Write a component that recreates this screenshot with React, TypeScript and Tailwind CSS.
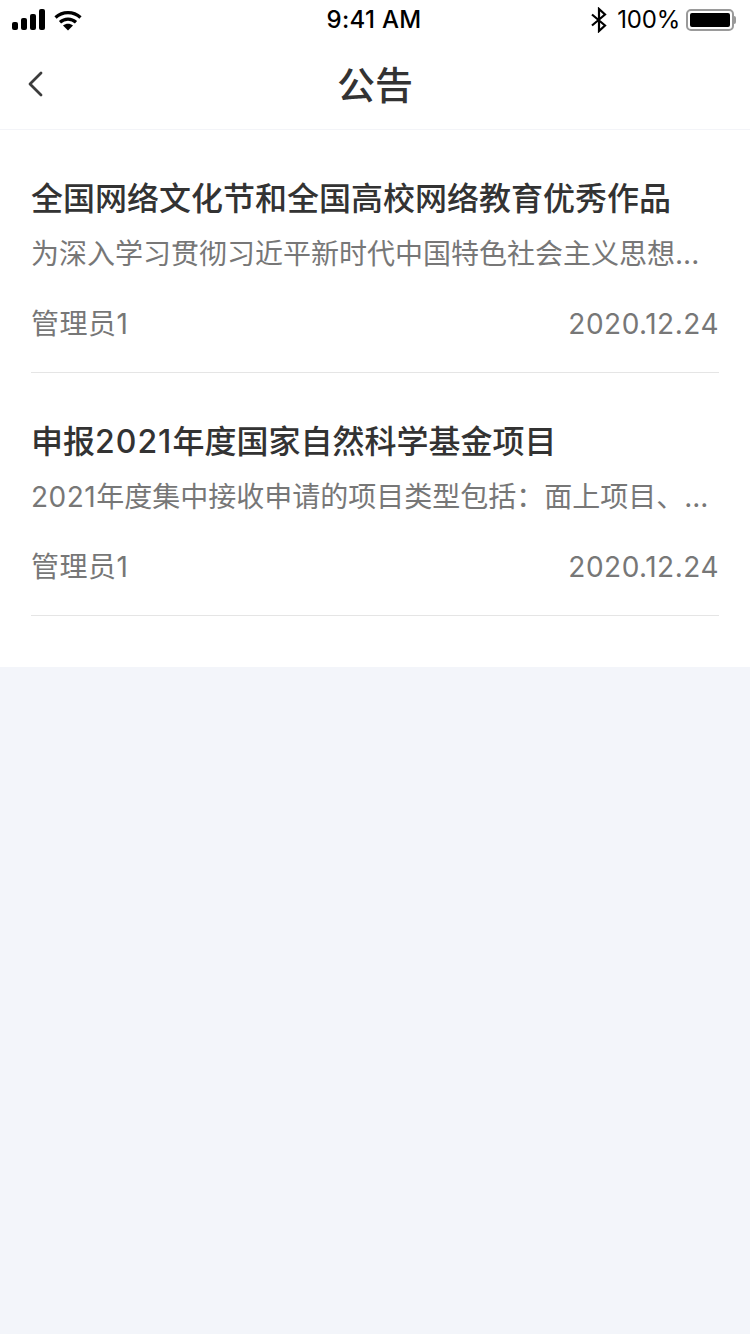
import React from 'react';

const notices = [
  {
    title: <>全国网络文化节和全国高校网络教育优秀作品</>,
    summary: <>为深入学习贯彻习近平新时代中国特色社会主义思想...</>,
    author: '管理员1',
    date: '2020.12.24',
  },
  {
    title: <>申报<span className="tracking-[1px]">2021</span>年度国家自然科学基金项目</>,
    summary: <><span className="tracking-[0.5px]">2021</span>年度集中接收申请的项目类型包括：面上项目、...</>,
    author: '管理员1',
    date: '2020.12.24',
  },
];

const StatusBar = () => (
  <div className="flex h-10 items-center justify-between pl-3 pr-[14px] text-black">
    <div className="flex w-[200px] items-center gap-[8px]">
      <svg width="34" height="22" viewBox="0 0 34 22" fill="currentColor">
        <rect x="0" y="13" width="6" height="8" rx="2" />
        <rect x="9" y="9" width="6" height="12" rx="2" />
        <rect x="18" y="5" width="6" height="16" rx="2" />
        <rect x="27" y="0" width="6" height="21" rx="2" />
      </svg>
      <svg width="28" height="21" viewBox="0 0 28 21" fill="none" stroke="currentColor" strokeWidth="3.2">
        <path d="M1.5 7.5C8.5 .9 19.5 .9 26.5 7.5" />
        <path d="M6 12.2C10.6 8 17.4 8 22 12.2" />
        <path d="M14 20.5L9 15.4C12 13.1 16 13.1 19 15.4Z" fill="currentColor" stroke="none" />
      </svg>
    </div>
    <span className="text-[24px] leading-none font-medium tracking-[0.3px]">9:41 AM</span>
    <div className="flex w-[200px] items-center justify-end">
      <svg width="18" height="26" viewBox="0 0 18 26" fill="none" stroke="currentColor" strokeWidth="2.2" className="mr-[9px]">
        <path d="M2 7.5L15 18.5L9 24V2L15 7.5L2 18.5" />
      </svg>
      <span className="mr-[6px] text-[24px] leading-none tracking-[-0.2px]">100%</span>
      <div className="flex items-center">
        <div className="flex h-[22px] w-[48px] items-center rounded-[5px] border-2 border-[#9a9a9a] p-[2px]">
          <div className="h-full w-full rounded-[2px] bg-black" />
        </div>
        <div className="h-[8px] w-[2px] rounded-r-full bg-[#9a9a9a]" />
      </div>
    </div>
  </div>
);

const NoticeItem = ({ title, summary, author, date }: (typeof notices)[number]) => (
  <div className="flex h-[243px] flex-col border-b border-[#e5e5e5] pt-[47px]">
    <h3 className="text-[32px] leading-[44px] font-medium whitespace-nowrap text-[#333333]">{title}</h3>
    <p className="mt-[13px] text-[28px] leading-[40px] whitespace-nowrap text-[#777777]">{summary}</p>
    <div className="mt-[30px] flex items-center justify-between text-[28px] leading-[40px] text-[#777777]">
      <span className="tracking-[0.5px]">{author}</span>
      <span className="tracking-[0.5px]">{date}</span>
    </div>
  </div>
);

export default function App() {
  return (
    <div className="flex h-[1334px] w-[750px] flex-col overflow-hidden bg-[#f3f5fa] font-['Inter','Noto_Sans_CJK_SC',sans-serif]">
      <div className="bg-white">
        <StatusBar />
        <div className="relative flex h-[90px] items-center justify-center border-b border-[#f3f4f8]">
          <svg width="18" height="26" viewBox="0 0 18 26" fill="none" stroke="#3c3c3c" strokeWidth="2.8" strokeLinecap="round" strokeLinejoin="round" className="absolute top-[31px] left-[27px]">
            <path d="M14 2L3 13L14 24" />
          </svg>
          <h1 className="text-[38px] leading-none font-medium text-[#333333]">公告</h1>
        </div>
      </div>
      <div className="h-[537px] bg-white pl-[31px] pr-[31px]">
        {notices.map((n, i) => (
          <NoticeItem key={i} {...n} />
        ))}
      </div>
    </div>
  );
}
